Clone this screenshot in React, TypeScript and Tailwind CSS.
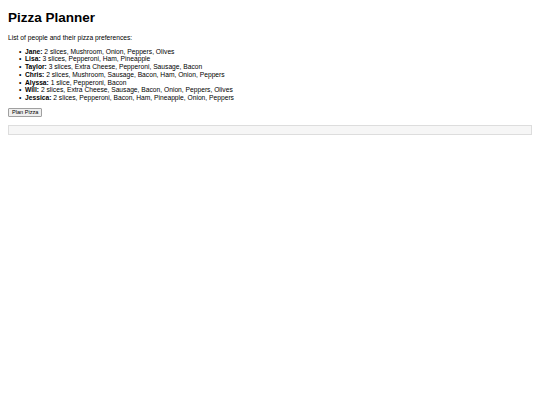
const people = [
  { name: "Jane", slices: "2 slices", toppings: ["Mushroom", "Onion", "Peppers", "Olives"] },
  { name: "Lisa", slices: "3 slices", toppings: ["Pepperoni", "Ham", "Pineapple"] },
  { name: "Taylor", slices: "3 slices", toppings: ["Extra Cheese", "Pepperoni", "Sausage", "Bacon"] },
  { name: "Chris", slices: "2 slices", toppings: ["Mushroom", "Sausage", "Bacon", "Ham", "Onion", "Peppers"] },
  { name: "Alyssa", slices: "1 slice", toppings: ["Pepperoni", "Bacon"] },
  { name: "Will", slices: "2 slices", toppings: ["Extra Cheese", "Sausage", "Bacon", "Onion", "Peppers", "Olives"] },
  { name: "Jessica", slices: "2 slices", toppings: ["Pepperoni", "Bacon", "Ham", "Pineapple", "Onion", "Peppers"] },
];

export default function App() {
  return (
    <div className="min-h-[405px] bg-white px-2 pt-[10px] text-black font-['Liberation_Sans',Arial,sans-serif] text-[6.7px]">
      <h1 className="text-[13.5px] font-bold leading-[16px] mb-[8px]">Pizza Planner</h1>
      <p className="leading-[7.7px] mb-[6px]">List of people and their pizza preferences:</p>
      <ul className="pl-[11px] leading-[7.7px] mb-[5px]">
        {people.map((p) => (
          <li key={p.name} className="flex">
            <span className="w-[6px] shrink-0">•</span>
            <span>
              <strong className="font-bold">{p.name}:</strong> {p.slices}, {p.toppings.join(", ")}
            </span>
          </li>
        ))}
      </ul>
      <button className="border border-[#a0a0a0] bg-[#efefef] px-[3px] h-[9px] leading-[7px] text-[5.6px] rounded-[1px]">
        Plan Pizza
      </button>
      <div className="mt-[8px] h-[10px] border border-[#dddddd] bg-[#f6f6f6]" />
    </div>
  );
}
